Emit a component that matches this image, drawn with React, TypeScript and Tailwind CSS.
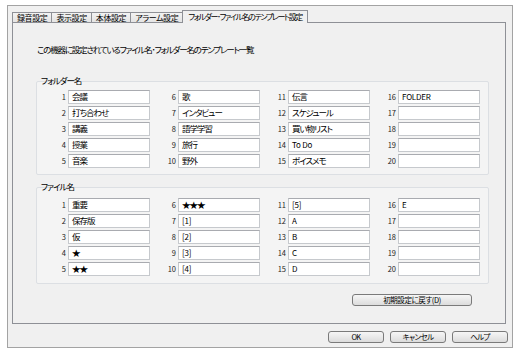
const font = "font-['MS_UI_Gothic','Noto_Sans_CJK_JP',sans-serif] [font-feature-settings:'palt']";

const tabs = ["録音設定", "表示設定", "本体設定", "アラーム設定"];

const folders = ["会議", "打ち合わせ", "講義", "授業", "音楽", "歌", "インタビュー", "語学学習", "旅行", "野外", "伝言", "スケジュール", "買い物リスト", "To Do", "ボイスメモ", "FOLDER", "", "", "", ""];
const files = ["重要", "保存版", "仮", "★", "★★", "★★★", "[1]", "[2]", "[3]", "[4]", "[5]", "A", "B", "C", "D", "E", "", "", "", ""];

const isAscii = (s: string) => /^[\x20-\x7e]*$/.test(s);

function Field({ n, value }: { n: number; value: string }) {
  return (
    <div className="flex items-center gap-[2px]">
      <span className="w-[16px] text-right text-[7.5px] leading-none text-[#222]">{n}</span>
      <div
        className={`h-[14px] w-[82px] overflow-hidden whitespace-nowrap border border-[#c6c9cd] border-t-[#a9abb0] bg-white pl-[3px] leading-[11px] text-black ${
          isAscii(value) ? "text-[8px] tracking-[-0.2px]" : "text-[8.5px] tracking-[-1px]"
        }`}
      >
        {value}
      </div>
    </div>
  );
}

function Group({ label, items, className }: { label: string; items: string[]; className: string }) {
  // column-major: 1-5, 6-10, 11-15, 16-20
  return (
    <div className={`relative w-[453px] rounded-[2px] border border-[#dcdfe3] bg-[#f4f4f4] pl-[13px] ${className}`}>
      <span className="absolute -top-[7px] left-[3px] px-[1px] text-[8.5px] leading-[11px] tracking-[-1px] text-black">{label}</span>
      <div className="grid grid-flow-col grid-cols-[100px_100px_100px_100px] grid-rows-5 gap-x-[10px] gap-y-[2px]">
        {items.map((v, i) => (
          <Field key={i} n={i + 1} value={v} />
        ))}
      </div>
    </div>
  );
}

function Btn({ children, className = "" }: { children: React.ReactNode; className?: string }) {
  return (
    <div className={`flex h-[12px] items-center justify-center rounded-[3px] border border-[#7a7a7a] bg-gradient-to-b from-[#f6f6f6] to-[#dcdcdc] text-[7.5px] leading-none text-black ${className}`}>
      {children}
    </div>
  );
}

export default function App() {
  return (
    <div className={`h-[354px] w-[520px] bg-white pl-[7px] pt-[5px] ${font}`}>
      <div className="h-[343px] w-[506px] border border-[#a3a3a3] bg-[#f0f0f0] pl-[4px] pr-[4px] pt-[5px]">
        {/* tab strip */}
        <div className="flex h-[11px] items-end">
          {tabs.map((t) => (
            <div key={t} className="flex h-[10px] items-center border border-b-0 border-r-0 border-[#8e9096] bg-gradient-to-b from-[#f3f3f3] to-[#e4e4e4] px-[4px] text-[8px] leading-none tracking-[-0.4px] text-black">
              {t}
            </div>
          ))}
          <div className="relative z-10 -mb-[1px] flex h-[13px] items-center border border-b-0 border-[#8e9096] bg-[#f0f0f0] px-[5px] text-[8px] leading-none tracking-[-1.4px] text-black">
            フォルダー･ファイル名のテンプレート設定
          </div>
        </div>
        {/* panel */}
        <div className="flex h-[302px] w-[494px] flex-col border border-[#8e9096] bg-[#f0f0f0] pl-[23px]">
          <div className="ml-[1px] mt-[20px] h-[12px] whitespace-nowrap text-[8.5px] leading-[12px] tracking-[-1.2px] text-black">
            この機器に設定されているファイル名･フォルダー名のテンプレート一覧
          </div>
          <Group label="フォルダー名" items={folders} className="mt-[26px] pb-[6px] pt-[8px]" />
          <Group label="ファイル名" items={files} className="mt-[12px] pb-[7px] pt-[10px]" />
          <div className="mt-[10px] flex w-[453px] justify-end pr-[17px]">
            <Btn className="w-[120px] tracking-[-0.4px]">初期設定に戻す(D)</Btn>
          </div>
        </div>
        {/* dialog buttons */}
        <div className="mt-[7px] flex justify-end gap-[6px]">
          <Btn className="w-[56px] tracking-[-0.6px]">OK</Btn>
          <Btn className="w-[56px] tracking-[-0.6px]">キャンセル</Btn>
          <Btn className="w-[56px] tracking-[-0.6px]">ヘルプ</Btn>
        </div>
      </div>
    </div>
  );
}
